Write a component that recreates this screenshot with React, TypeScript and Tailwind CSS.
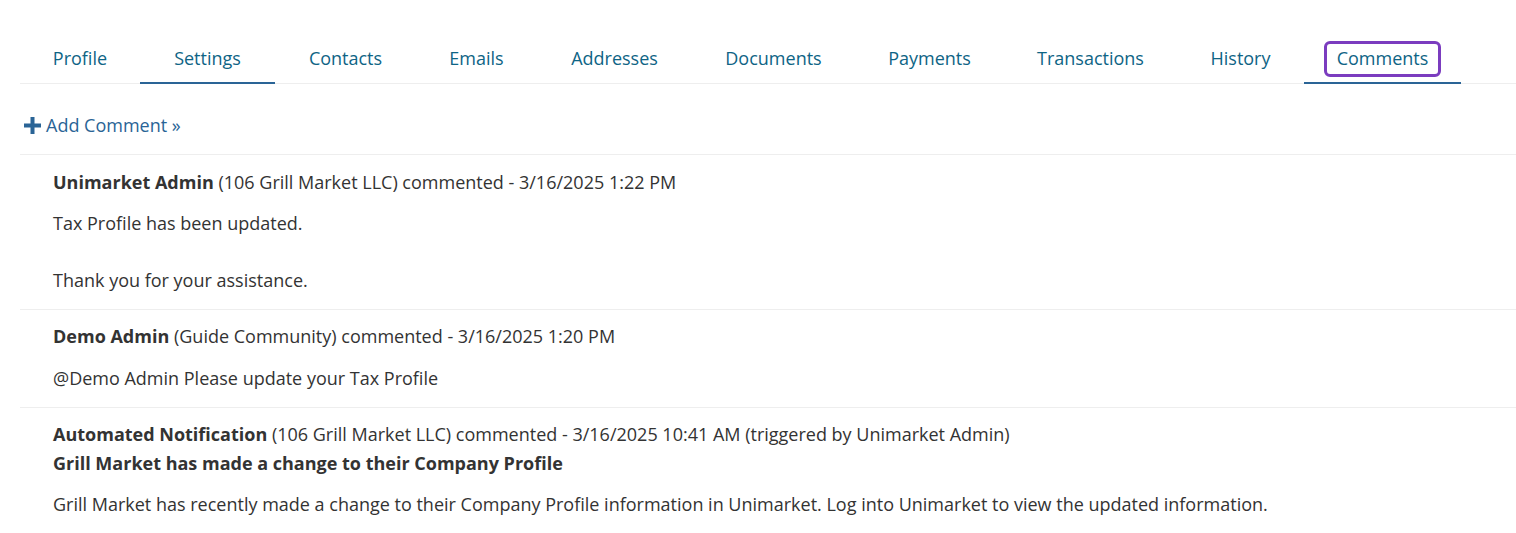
import React from "react";

const tabs: { label: string; w: string; active?: boolean; boxed?: boolean }[] = [
  { label: "Profile", w: "w-[120px]" },
  { label: "Settings", w: "w-[135px]", active: true },
  { label: "Contacts", w: "w-[141px]" },
  { label: "Emails", w: "w-[121px]" },
  { label: "Addresses", w: "w-[155px]" },
  { label: "Documents", w: "w-[163px]" },
  { label: "Payments", w: "w-[149px]" },
  { label: "Transactions", w: "w-[173px]" },
  { label: "History", w: "w-[127px]" },
  { label: "Comments", w: "w-[157px]", active: true, boxed: true },
];

function Comment({
  author,
  meta,
  title,
  lines,
  last,
  pt,
  mt,
}: {
  author: string;
  meta: string;
  title?: string;
  lines: string[];
  last?: boolean;
  pt: string;
  mt: string;
}) {
  return (
    <div className={"pl-[33px] pb-[15px] " + pt + " " + (last ? "" : "border-b border-[#eeeeee]")}>
      <div className="leading-[28px]">
        <span className="font-bold">{author}</span> {meta}
      </div>
      {title && <div className="leading-[28px] mt-px font-bold">{title}</div>}
      <div className={mt}>
        {lines.map((l, i) => (
          <div key={i} className={"leading-[28px] " + (l === "" ? "h-[29px]" : "")}>
            {l}
          </div>
        ))}
      </div>
    </div>
  );
}

export default function App() {
  return (
    <div
      className="w-[1516px] h-[533px] bg-white overflow-hidden pt-[41px] pl-[20px]"
      style={{ fontFamily: "'Open Sans', 'Noto Sans', sans-serif" }}
    >
      <div className="flex border-b border-[#eeeeee] h-[43px]">
        {tabs.map((t) => (
          <div
            key={t.label}
            className={
              t.w +
              " flex justify-center h-[43px] border-b-2 " +
              (t.active ? "border-[#2a6496]" : "border-transparent")
            }
          >
            <span
              className={
                "inline-block h-[36px] border-[3px] rounded-[6px] px-[10px] pt-[2px] pb-[4px] leading-6 text-[18px] text-[#0e6485] " +
                (t.boxed ? "border-[#7b3cbf]" : "border-transparent")
              }
            >
              {t.label}
            </span>
          </div>
        ))}
      </div>

      <div className="h-[71px] border-b border-[#eeeeee] flex items-start pt-[29px] pl-[4px] text-[#2a6496] text-[18px]">
        <svg width="17" height="17" viewBox="0 0 17 17" className="mr-[5px] mt-[4px]">
          <rect x="6.5" y="0" width="4" height="17" fill="#2a6496" />
          <rect x="0" y="6.5" width="17" height="4" fill="#2a6496" />
        </svg>
        <span className="leading-6">Add Comment »</span>
      </div>

      <div className="text-[18px] text-[#333333]">
        <Comment
          pt="pt-[13px]"
          mt="mt-[13px]"
          author="Unimarket Admin"
          meta="(106 Grill Market LLC) commented - 3/16/2025 1:22 PM"
          lines={["Tax Profile has been updated.", "", "Thank you for your assistance."]}
        />
        <Comment
          pt="pt-[12px]"
          mt="mt-[14px]"
          author="Demo Admin"
          meta="(Guide Community) commented - 3/16/2025 1:20 PM"
          lines={["@Demo Admin Please update your Tax Profile"]}
        />
        <Comment
          pt="pt-[12px]"
          mt="mt-[13px]"
          author="Automated Notification"
          meta="(106 Grill Market LLC) commented - 3/16/2025 10:41 AM (triggered by Unimarket Admin)"
          title="Grill Market has made a change to their Company Profile"
          lines={[
            "Grill Market has recently made a change to their Company Profile information in Unimarket. Log into Unimarket to view the updated information.",
          ]}
          last
        />
      </div>
    </div>
  );
}
